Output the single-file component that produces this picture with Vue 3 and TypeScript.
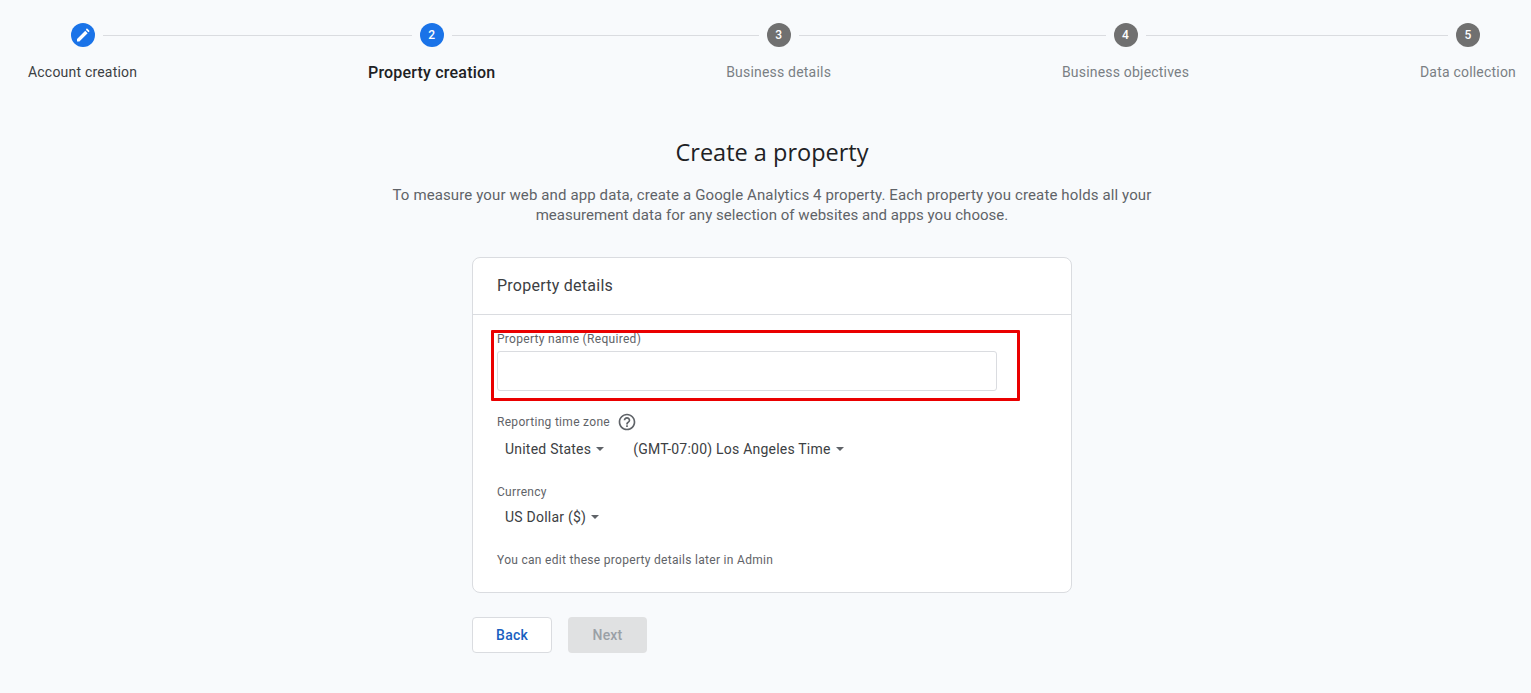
<script setup lang="ts">
interface Step {
  label: string;
  state: 'done' | 'active' | 'todo';
}

const steps: Step[] = [
  { label: 'Account creation', state: 'done' },
  { label: 'Property creation', state: 'active' },
  { label: 'Business details', state: 'todo' },
  { label: 'Business objectives', state: 'todo' },
  { label: 'Data collection', state: 'todo' },
];
</script>

<template>
  <div class="page">
    <div class="stepper">
      <template v-for="(step, index) in steps" :key="step.label">
        <div class="step" :class="`step--${step.state}`">
          <div class="step__head">
            <span class="step__line" :class="{ 'step__line--off': index === 0 }"></span>
            <span class="step__circle">
              <svg v-if="step.state === 'done'" width="18" height="18" viewBox="0 0 24 24" fill="#fff">
                <path d="M4 17.4V20.6h3.2L18.2 9.6 15 6.4 4 17.4zM20.2 7.6a1.1 1.1 0 0 0 0-1.6l-2.2-2.2a1.1 1.1 0 0 0-1.6 0L16 5.2l3.4 3.2.8-.8z" />
              </svg>
              <template v-else>{{ index + 1 }}</template>
            </span>
            <span class="step__line" :class="{ 'step__line--off': index === steps.length - 1 }"></span>
          </div>
          <div class="step__label">{{ step.label }}</div>
        </div>
        <span v-if="index < steps.length - 1" class="stepper__line"></span>
      </template>
    </div>

    <main class="main">
      <h1 class="main__title">Create a property</h1>
      <p class="main__text">
        To measure your web and app data, create a Google Analytics 4 property. Each property you create holds all your<br />
        <span class="main__text-second">measurement data for any selection of websites and apps you choose.</span>
      </p>

      <section class="card">
        <div class="card__title">Property details</div>
        <div class="card__body">
          <div class="name-field">
            <label class="field-label field-label--name">Property name (Required)</label>
            <input class="name-field__input" type="text" />
          </div>

          <div class="field-label field-label--zone">
            Reporting time zone
            <svg class="help" width="20" height="20" viewBox="0 0 24 24" fill="#5f6368">
              <path d="M12 2C6.48 2 2 6.48 2 12s4.48 10 10 10 10-4.48 10-10S17.52 2 12 2zm0 18c-4.41 0-8-3.59-8-8s3.59-8 8-8 8 3.59 8 8-3.59 8-8 8zm-1-4h2v2h-2v-2zm1-10c-2.21 0-4 1.79-4 4h2c0-1.1.9-2 2-2s2 .9 2 2c0 2-3 1.75-3 5h2c0-2.25 3-2.5 3-5 0-2.21-1.79-4-4-4z" />
            </svg>
          </div>
          <div class="selects">
            <span class="select select--country">United States<i class="select__arrow"></i></span>
            <span class="select">(GMT-07:00) Los Angeles Time<i class="select__arrow"></i></span>
          </div>

          <div class="field-label field-label--currency">Currency</div>
          <div class="selects selects--currency">
            <span class="select">US Dollar ($)<i class="select__arrow"></i></span>
          </div>

          <div class="field-label card__note">You can edit these property details later in Admin</div>
        </div>
      </section>

      <div class="actions">
        <button class="btn btn--back" type="button">Back</button>
        <button class="btn btn--next" type="button" disabled>Next</button>
      </div>
    </main>
  </div>
</template>

<style>
html,
body {
  margin: 0;
  background: #f8fafc;
}
</style>

<style scoped>
.page {
  height: 693px;
  overflow: hidden;
  background: #f8fafc;
  font-family: Roboto, 'Liberation Sans', sans-serif;
  color: #202124;
}

.stepper {
  display: flex;
  padding: 23px 15px 0 28px;
}

.stepper__line {
  flex: 1;
  height: 1px;
  margin-top: 12px;
  background: #dadce0;
}

.step {
  flex: none;
}

.step__head {
  display: flex;
  align-items: center;
}

.step__line {
  flex: 1;
  height: 1px;
  background: #dadce0;
}

.step__line--off {
  background: transparent;
}

.step__circle {
  flex: none;
  display: flex;
  align-items: center;
  justify-content: center;
  width: 24px;
  height: 24px;
  margin: 0 8px;
  border-radius: 50%;
  background: #1a73e8;
  color: #fff;
  font-size: 12px;
  font-weight: 500;
}

.step--todo .step__circle {
  background: #707070;
}

.step__label {
  margin-top: 15px;
  font-size: 14px;
  line-height: 20px;
  white-space: nowrap;
  letter-spacing: 0.2px;
  color: #3c4043;
}

.step--active .step__label {
  margin-top: 16px;
  font-size: 16px;
  font-weight: 500;
  color: #202124;
}

.step--todo .step__label {
  color: #7a7f84;
}

.main {
  display: flex;
  flex-direction: column;
  align-items: center;
  padding-left: 13px;
}

.main__title {
  margin: 53px 0 0;
  font-family: 'Open Sans', sans-serif;
  font-size: 23.5px;
  line-height: 32px;
  font-weight: 400;
}

.main__text {
  margin: 17px 0 0;
  font-size: 15px;
  line-height: 20px;
  letter-spacing: 0.12px;
  text-align: center;
  color: #5f6368;
}

.main__text-second {
  letter-spacing: 0.04px;
}

.card {
  box-sizing: border-box;
  width: 600px;
  height: 336px;
  margin-top: 32px;
  border: 1px solid #dadce0;
  border-radius: 8px;
  background: #fff;
}

.card__title {
  height: 56px;
  padding-left: 24px;
  border-bottom: 1px solid #dadce0;
  font-size: 16px;
  line-height: 55px;
  letter-spacing: 0.25px;
  color: #3c4043;
}

.card__body {
  padding: 13px 24px 0;
}

.name-field {
  width: 500px;
}

.name-field__input {
  display: block;
  box-sizing: border-box;
  width: 100%;
  height: 40px;
  margin-top: 4px;
  border: 1px solid #dadce0;
  border-radius: 3px;
  background: #fff;
}

.name-field::before {
  content: '';
  position: absolute;
  box-sizing: border-box;
  width: 529px;
  height: 71px;
  margin: 2px 0 0 -6px;
  border: 3px solid #ea0000;
  border-radius: 1px;
  pointer-events: none;
}

.field-label {
  font-size: 12px;
  line-height: 16px;
  letter-spacing: 0.3px;
  color: #5f6368;
}

.field-label--zone {
  display: flex;
  align-items: center;
  gap: 7px;
  margin-top: 22px;
  height: 18px;
}

.field-label--currency {
  margin-top: 25px;
}

.help {
  flex: none;
}

.selects {
  display: flex;
  margin-top: 8px;
  padding-left: 8px;
}

.selects--currency {
  margin-top: 7px;
}

.select {
  display: inline-flex;
  align-items: center;
  font-size: 14px;
  line-height: 20px;
  letter-spacing: 0.22px;
  color: #3c4043;
}

.select--country {
  margin-right: 29px;
}

.select__arrow {
  width: 0;
  height: 0;
  margin-left: 5px;
  border-left: 4px solid transparent;
  border-right: 4px solid transparent;
  border-top: 4px solid #5f6368;
}

.card__note {
  margin-top: 25px;
}

.actions {
  display: flex;
  gap: 16px;
  width: 600px;
  margin-top: 24px;
}

.btn {
  box-sizing: border-box;
  height: 36px;
  border-radius: 4px;
  font-family: Roboto, sans-serif;
  font-size: 14px;
  font-weight: 500;
  letter-spacing: 0.2px;
}

.btn--back {
  width: 80px;
  border: 1px solid #dadce0;
  background: #fff;
  color: #1a5fc0;
}

.btn--next {
  width: 79px;
  border: 0;
  background: #e0e1e2;
  color: #9aa0a6;
}
</style>
